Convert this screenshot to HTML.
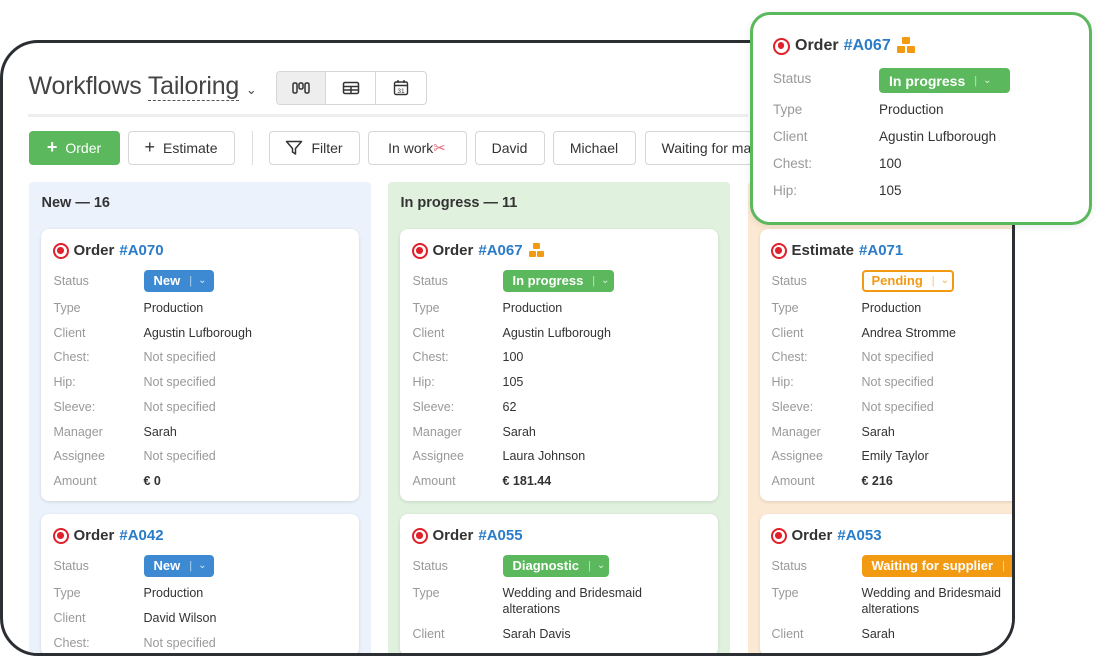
<!DOCTYPE html>
<html><head><meta charset="utf-8"><style>
*{box-sizing:border-box;margin:0;padding:0}
html,body{width:1104px;height:656px;overflow:hidden}
body{background:#fff;position:relative;font-family:"Liberation Sans",sans-serif;color:#333}
.a{position:absolute}
.frame{position:absolute;left:0;top:40px;width:1015px;height:616px;border:3.5px solid #2b2f33;border-radius:38px;overflow:hidden;background:#fff}
.in{position:absolute;left:-3.5px;top:-43.5px;width:1104px;height:656px;overflow:hidden}
.btn{position:absolute;top:131px;height:34px;border:1px solid #d6d6d6;border-radius:4px;background:#fff;font-size:14px;color:#333;display:flex;align-items:center;justify-content:center;white-space:nowrap;overflow:hidden}
.col{position:absolute;top:182px;width:342px;height:474px;border-radius:4px}
.colh{position:absolute;top:195px;font-size:14.5px;font-weight:bold;color:#333}
.card{position:absolute;width:318px;background:#fff;border-radius:8px;box-shadow:0 1px 3px rgba(0,0,0,.12)}
.t{position:absolute;font-size:15px;font-weight:bold;color:#333;white-space:nowrap;display:flex;align-items:center;height:20px}
.t b{color:#2a7bc8;margin-left:5px}
.tg{width:16px;height:16px;border-radius:50%;border:2.3px solid #e0202a;margin-right:5px;position:relative}
.tg:after{content:"";position:absolute;left:2.5px;top:2.5px;width:6.5px;height:6.5px;border-radius:50%;background:#e0202a}
.l{position:absolute;font-size:12.5px;color:#999;white-space:nowrap;line-height:16px}
.v{position:absolute;font-size:12.5px;color:#333;white-space:nowrap;line-height:16px}
.v.g{color:#999}.v.bd{font-weight:bold}
.bg{position:absolute;height:22px;border-radius:4px;color:#fff;font-size:13px;font-weight:bold;display:flex;align-items:center;padding-left:10px;white-space:nowrap}
.bg i{font-style:normal;font-weight:normal;opacity:.6;margin:0 6px 0 9px;font-size:11px}
.bg s{text-decoration:none;font-weight:normal;font-size:10px;opacity:.8}
.box{display:inline-block;margin-left:6px;width:16px;height:16px;position:relative}
.box span{position:absolute;width:7px;height:6px;background:#f39a13;border-radius:1px}
</style></head><body>
<div class="frame"><div class="in">
<div class="a" style="left:29px;top:72px;font-size:25px;color:#444;letter-spacing:-.2px">Workflows <span style="border-bottom:1.5px dashed #555">Tailoring</span> <span style="font-size:13px">&#8964;</span></div>
<div class="a" style="left:276px;top:71px;width:151px;height:34px;border:1px solid #d6d6d6;border-radius:4px;display:flex;overflow:hidden">
<div style="width:50px;background:#eee;border-right:1px solid #d6d6d6;display:flex;align-items:center;justify-content:center"><svg width="18" height="14"><rect x="1" y="2" width="4" height="10" rx="1.5" fill="none" stroke="#333" stroke-width="1.5"/><rect x="7" y="2" width="4" height="6" rx="1.5" fill="none" stroke="#333" stroke-width="1.5"/><rect x="13" y="2" width="4" height="10" rx="1.5" fill="none" stroke="#333" stroke-width="1.5"/></svg></div>
<div style="width:50px;border-right:1px solid #d6d6d6;display:flex;align-items:center;justify-content:center"><svg width="18" height="14"><rect x="1.5" y="1.5" width="15" height="11" rx="1.5" fill="none" stroke="#333" stroke-width="1.5"/><path d="M1.5 5.5h15M1.5 9h15M9 5.5v7" stroke="#333" stroke-width="1.5"/></svg></div>
<div style="width:50px;display:flex;align-items:center;justify-content:center"><svg width="16" height="17"><rect x="1.5" y="3" width="13" height="12.5" rx="1.5" fill="none" stroke="#333" stroke-width="1.4"/><path d="M1.5 6.5h13M5 1v3M11 1v3" stroke="#333" stroke-width="1.4"/><text x="8" y="14" font-size="6.5" text-anchor="middle" font-family="Liberation Sans" fill="#333">31</text></svg></div>
</div>
<div class="a" style="left:28px;top:114px;width:720px;height:3px;background:#eee"></div>
<div class="btn" style="left:29px;width:91px;background:#5cb85c;border-color:#5cb85c;color:#fff"><span style="font-size:18px;margin-right:8px;font-weight:bold">+</span>Order</div>
<div class="btn" style="left:128px;width:107px"><span style="font-size:18px;margin-right:8px">+</span>Estimate</div>
<div class="a" style="left:252px;top:131px;width:1px;height:34px;background:#ddd"></div>
<div class="btn" style="left:269px;width:91px"><svg width="18" height="16" style="margin-right:8px"><path d="M1.5 1.5h15l-6 7v5.5l-3-2v-3.5z" fill="none" stroke="#333" stroke-width="1.5" stroke-linejoin="round"/></svg>Filter</div>
<div class="btn" style="left:368px;width:99px">In work<span style="color:#e06a7a;font-size:15px">&#9986;</span></div>
<div class="btn" style="left:475px;width:70px">David</div>
<div class="btn" style="left:553px;width:83px">Michael</div>
<div class="btn" style="left:645px;width:140px;justify-content:flex-start;padding-left:16px">Waiting for mat</div>

<div class="col" style="left:29px;background:#ebf2fb"></div>
<div class="col" style="left:388px;background:#e0f1de"></div>
<div class="col" style="left:748px;background:#fbe9d3"></div>
<div class="colh" style="left:42px">New — 16</div>
<div class="colh" style="left:401px">In progress — 11</div>

<div class="card" style="left:41px;top:229px;height:272px"></div>
<div class="t" style="left:53px;top:241px"><span class="tg"></span>Order<b>#A070</b></div>
<div class="bg" style="left:144px;top:270px;width:70px;background:#3d8ad3">New<i>|</i><s>&#8964;</s></div>
<div class="l" style="left:54px;top:273px">Status</div>
<div class="l" style="left:54px;top:300px">Type</div><div class="v" style="left:144px;top:300px">Production</div>
<div class="l" style="left:54px;top:325px">Client</div><div class="v" style="left:144px;top:325px">Agustin Lufborough</div>
<div class="l" style="left:54px;top:349px">Chest:</div><div class="v g" style="left:144px;top:349px">Not specified</div>
<div class="l" style="left:54px;top:374px">Hip:</div><div class="v g" style="left:144px;top:374px">Not specified</div>
<div class="l" style="left:54px;top:399px">Sleeve:</div><div class="v g" style="left:144px;top:399px">Not specified</div>
<div class="l" style="left:54px;top:424px">Manager</div><div class="v" style="left:144px;top:424px">Sarah</div>
<div class="l" style="left:54px;top:448px">Assignee</div><div class="v g" style="left:144px;top:448px">Not specified</div>
<div class="l" style="left:54px;top:473px">Amount</div><div class="v bd" style="left:144px;top:473px">€ 0</div>
<div class="card" style="left:41px;top:514px;height:142px"></div>
<div class="t" style="left:53px;top:526px"><span class="tg"></span>Order<b>#A042</b></div>
<div class="l" style="left:54px;top:558px">Status</div>
<div class="bg" style="left:144px;top:555px;width:70px;background:#3d8ad3">New<i>|</i><s>&#8964;</s></div>
<div class="l" style="left:54px;top:585px">Type</div><div class="v" style="left:144px;top:585px">Production</div>
<div class="l" style="left:54px;top:610px">Client</div><div class="v" style="left:144px;top:610px">David Wilson</div>
<div class="l" style="left:54px;top:635px">Chest:</div><div class="v g" style="left:144px;top:635px">Not specified</div>

<div class="card" style="left:400px;top:229px;height:272px"></div>
<div class="t" style="left:412px;top:241px"><span class="tg"></span>Order<b>#A067</b><span class="box"><span style="left:4.5px;top:0"></span><span style="left:0;top:8px"></span><span style="left:8.5px;top:8px"></span></span></div>
<div class="l" style="left:413px;top:273px">Status</div>
<div class="bg" style="left:503px;top:270px;width:111px;background:#5cb85c">In progress<i>|</i><s>&#8964;</s></div>
<div class="l" style="left:413px;top:300px">Type</div><div class="v" style="left:503px;top:300px">Production</div>
<div class="l" style="left:413px;top:325px">Client</div><div class="v" style="left:503px;top:325px">Agustin Lufborough</div>
<div class="l" style="left:413px;top:349px">Chest:</div><div class="v" style="left:503px;top:349px">100</div>
<div class="l" style="left:413px;top:374px">Hip:</div><div class="v" style="left:503px;top:374px">105</div>
<div class="l" style="left:413px;top:399px">Sleeve:</div><div class="v" style="left:503px;top:399px">62</div>
<div class="l" style="left:413px;top:424px">Manager</div><div class="v" style="left:503px;top:424px">Sarah</div>
<div class="l" style="left:413px;top:448px">Assignee</div><div class="v" style="left:503px;top:448px">Laura Johnson</div>
<div class="l" style="left:413px;top:473px">Amount</div><div class="v bd" style="left:503px;top:473px">€ 181.44</div>
<div class="card" style="left:400px;top:514px;height:142px"></div>
<div class="t" style="left:412px;top:526px"><span class="tg"></span>Order<b>#A055</b></div>
<div class="l" style="left:413px;top:558px">Status</div>
<div class="bg" style="left:503px;top:555px;width:106px;background:#5cb85c">Diagnostic<i>|</i><s>&#8964;</s></div>
<div class="l" style="left:413px;top:585px">Type</div><div class="v" style="left:503px;top:585px">Wedding and Bridesmaid<br>alterations</div>
<div class="l" style="left:413px;top:626px">Client</div><div class="v" style="left:503px;top:626px">Sarah Davis</div>

<div class="card" style="left:760px;top:229px;height:272px;width:300px"></div>
<div class="t" style="left:771px;top:241px"><span class="tg"></span>Estimate<b>#A071</b></div>
<div class="l" style="left:772px;top:273px">Status</div>
<div class="bg" style="left:862px;top:270px;width:92px;background:#fff;border:2px solid #f39a13;color:#f39a13;padding-left:8px">Pending<i>|</i><s>&#8964;</s></div>
<div class="l" style="left:772px;top:300px">Type</div><div class="v" style="left:862px;top:300px">Production</div>
<div class="l" style="left:772px;top:325px">Client</div><div class="v" style="left:862px;top:325px">Andrea Stromme</div>
<div class="l" style="left:772px;top:349px">Chest:</div><div class="v g" style="left:862px;top:349px">Not specified</div>
<div class="l" style="left:772px;top:374px">Hip:</div><div class="v g" style="left:862px;top:374px">Not specified</div>
<div class="l" style="left:772px;top:399px">Sleeve:</div><div class="v g" style="left:862px;top:399px">Not specified</div>
<div class="l" style="left:772px;top:424px">Manager</div><div class="v" style="left:862px;top:424px">Sarah</div>
<div class="l" style="left:772px;top:448px">Assignee</div><div class="v" style="left:862px;top:448px">Emily Taylor</div>
<div class="l" style="left:772px;top:473px">Amount</div><div class="v bd" style="left:862px;top:473px">€ 216</div>
<div class="card" style="left:760px;top:514px;height:142px;width:300px"></div>
<div class="t" style="left:771px;top:526px"><span class="tg"></span>Order<b>#A053</b></div>
<div class="l" style="left:772px;top:558px">Status</div>
<div class="bg" style="left:862px;top:555px;width:170px;background:#f39a13">Waiting for supplier<i>|</i><s>&#8964;</s></div>
<div class="l" style="left:772px;top:585px">Type</div><div class="v" style="left:862px;top:585px">Wedding and Bridesmaid<br>alterations</div>
<div class="l" style="left:772px;top:626px">Client</div><div class="v" style="left:862px;top:626px">Sarah</div>
</div></div>

<div class="a" style="left:750px;top:12px;width:342px;height:213px;border:3px solid #5cb85c;border-radius:20px;background:#fff;box-shadow:0 2px 8px rgba(0,0,0,.08)"></div>
<div class="t" style="left:773px;top:36px;font-size:16px"><span class="tg" style="width:17px;height:17px"></span>Order<b>#A067</b><span class="box" style="width:18px;height:18px"><span style="left:5px;top:0;width:8px;height:7px"></span><span style="left:0;top:9px;width:8px;height:7px"></span><span style="left:10px;top:9px;width:8px;height:7px"></span></span></div>
<div class="l" style="left:773px;top:71px;font-size:13.5px">Status</div>
<div class="bg" style="left:879px;top:68px;width:131px;height:25px;background:#5cb85c;font-size:14px">In progress<i>|</i><s>&#8964;</s></div>
<div class="l" style="left:773px;top:102px;font-size:13.5px">Type</div><div class="v" style="left:879px;top:102px;font-size:13.5px">Production</div>
<div class="l" style="left:773px;top:129px;font-size:13.5px">Client</div><div class="v" style="left:879px;top:129px;font-size:13.5px">Agustin Lufborough</div>
<div class="l" style="left:773px;top:156px;font-size:13.5px">Chest:</div><div class="v" style="left:879px;top:156px;font-size:13.5px">100</div>
<div class="l" style="left:773px;top:183px;font-size:13.5px">Hip:</div><div class="v" style="left:879px;top:183px;font-size:13.5px">105</div>
</body></html>
